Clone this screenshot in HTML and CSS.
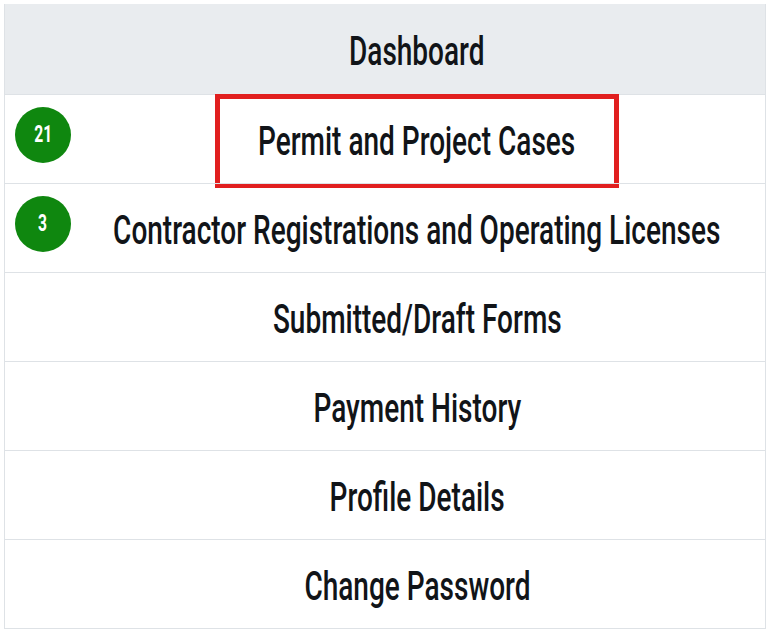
FILE: index.html
```html
<!DOCTYPE html>
<html lang="en">
<head>
<meta charset="utf-8">
<title>Dashboard</title>
<link rel="stylesheet" href="styles.css">
</head>
<body>
<div class="menu">
  <div class="row head">
    <div class="badge-cell"></div>
    <div class="label"><span class="txt">Dashboard</span></div>
  </div>
  <div class="row">
    <div class="badge-cell"><span class="badge"><span class="num">21</span></span></div>
    <div class="label"><span class="txt">Permit and Project Cases</span></div>
    <div class="highlight"></div>
  </div>
  <div class="row">
    <div class="badge-cell"><span class="badge"><span class="num">3</span></span></div>
    <div class="label"><span class="txt">Contractor Registrations and Operating Licenses</span></div>
  </div>
  <div class="row">
    <div class="badge-cell"></div>
    <div class="label"><span class="txt">Submitted/Draft Forms</span></div>
  </div>
  <div class="row">
    <div class="badge-cell"></div>
    <div class="label"><span class="txt">Payment History</span></div>
  </div>
  <div class="row">
    <div class="badge-cell"></div>
    <div class="label"><span class="txt">Profile Details</span></div>
  </div>
  <div class="row">
    <div class="badge-cell"></div>
    <div class="label"><span class="txt">Change Password</span></div>
  </div>
</div>
</body>
</html>
```
FILE: styles.css
```css
html, body {
  margin: 0;
  padding: 0;
  background: #ffffff;
}
body {
  padding: 4px 5px 4px 4px;
  font-family: Roboto, "Liberation Sans", sans-serif;
  color: #111418;
}
.menu {
  border: 1px solid #dee2e6;
  border-top: none;
  overflow: hidden;
}
.row {
  position: relative;
  display: grid;
  grid-template-columns: 64px 1fr;
  height: 88px;
  border-top: 1px solid #dee2e6;
}
.row.head {
  height: 90px;
  border-top: none;
  background: #e9ecef;
}
.badge-cell {
  display: flex;
  align-items: center;
  padding-left: 10px;
  padding-bottom: 9px;
}
.badge {
  flex: none;
  width: 56px;
  height: 56px;
  border-radius: 50%;
  background: #0f870f;
  display: flex;
  align-items: center;
  justify-content: center;
}
.num {
  color: #ffffff;
  font-size: 23px;
  font-weight: 700;
  transform: scaleX(0.68);
  line-height: 1;
}
.label {
  display: flex;
  align-items: center;
  justify-content: center;
  min-width: 0;
  white-space: nowrap;
}
.txt {
  display: inline-block;
  font-size: 40px;
  font-weight: 500;
  line-height: 1;
  transform: scaleX(0.70);
  margin-top: 6px;
}
.highlight {
  position: absolute;
  left: 210px;
  top: -1px;
  width: 394px;
  height: 84px;
  border: 5px solid #e11f1f;
  pointer-events: none;
}
```
